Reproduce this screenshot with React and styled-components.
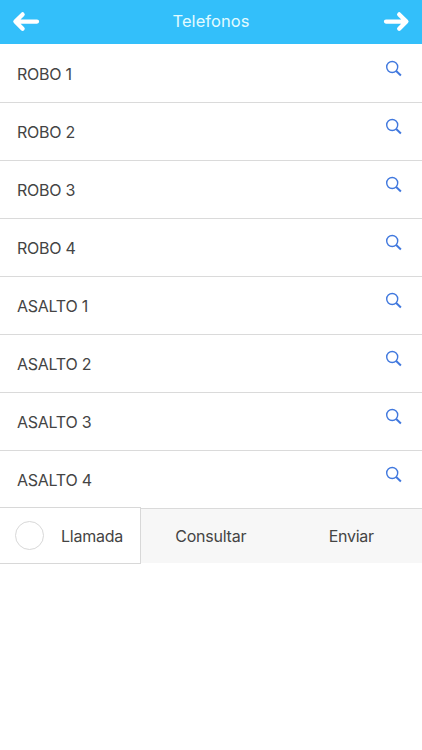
import React from 'react'
import styled, { createGlobalStyle } from 'styled-components'

const GlobalStyle = createGlobalStyle`
  * {
    box-sizing: border-box;
  }

  body {
    margin: 0;
    background-color: #ffffff;
    color: #444444;
    font-family: Inter, "Liberation Sans", sans-serif;
    font-size: 16px;
    letter-spacing: -0.25px;
  }
`

const Page = styled.div`
  min-height: 100vh;
`

const Header = styled.header`
  display: flex;
  justify-content: space-between;
  align-items: center;
  height: 44px;
  padding: 0 12px;
  background-color: #33bffa;
  color: #e2fbff;
`

const Title = styled.h1`
  margin: 0;
  padding-bottom: 2px;
  font-size: 16.5px;
  font-weight: 400;
  line-height: 40px;
  letter-spacing: 0.05px;
`

const NavButton = styled.button`
  display: flex;
  padding: 0;
  border: none;
  background: none;
  color: white;
`

const List = styled.ul`
  margin: 0;
  padding: 1px 0 0;
  list-style: none;
`

const Item = styled.li`
  display: flex;
  justify-content: space-between;
  height: 58px;
  padding: 0 20px 0 17px;
  border-bottom: 1px solid #dadada;
`

const Name = styled.span`
  line-height: 58px;
`

const SearchIcon = styled.svg`
  margin-top: 15px;
`

const Actions = styled.div`
  display: flex;
  height: 54px;
  background-color: #f7f7f7;
`

const CallOption = styled.label`
  display: flex;
  align-items: center;
  width: 141px;
  height: 57px;
  margin-top: -2px;
  padding-left: 15px;
  border: 1px solid #d8d8d8;
  border-left: none;
  background-color: white;
`

const Radio = styled.span`
  width: 29px;
  height: 29px;
  margin-right: 17px;
  border: 1px solid #d8d8d8;
  border-radius: 50%;
`

const Action = styled.button`
  flex: 1;
  padding: 0 1px 0 0;
  border: none;
  background: none;
  color: inherit;
  font: inherit;
  letter-spacing: inherit;
`

const phones = ['ROBO 1', 'ROBO 2', 'ROBO 3', 'ROBO 4', 'ASALTO 1', 'ASALTO 2', 'ASALTO 3', 'ASALTO 4']

function Arrow({ right }) {
  return (
    <svg width="28" height="22" viewBox="0 0 28 22" fill="none" stroke="currentColor" strokeWidth="4.3" strokeLinecap="round" strokeLinejoin="round">
      <path d={right ? 'M4 10.6H23M17.2 3.4L24.4 10.6L17.2 17.8' : 'M25 10.6H4M10.6 3.4L3.4 10.6L10.6 17.8'} />
    </svg>
  )
}

export default function App() {
  return (
    <Page>
      <GlobalStyle />
      <Header>
        <NavButton><Arrow /></NavButton>
        <Title>Telefonos</Title>
        <NavButton><Arrow right /></NavButton>
      </Header>

      <List>
        {phones.map(phone => (
          <Item key={phone}>
            <Name>{phone}</Name>
            <SearchIcon width="17" height="17" viewBox="0 0 17 17" fill="none" stroke="#4078de">
              <circle cx="7.2" cy="7" r="5.5" strokeWidth="1.4" />
              <path d="M11.2 11L15.9 15.5" strokeWidth="2" />
            </SearchIcon>
          </Item>
        ))}
      </List>

      <Actions>
        <CallOption>
          <Radio />
          Llamada
        </CallOption>
        <Action>Consultar</Action>
        <Action>Enviar</Action>
      </Actions>
    </Page>
  )
}
